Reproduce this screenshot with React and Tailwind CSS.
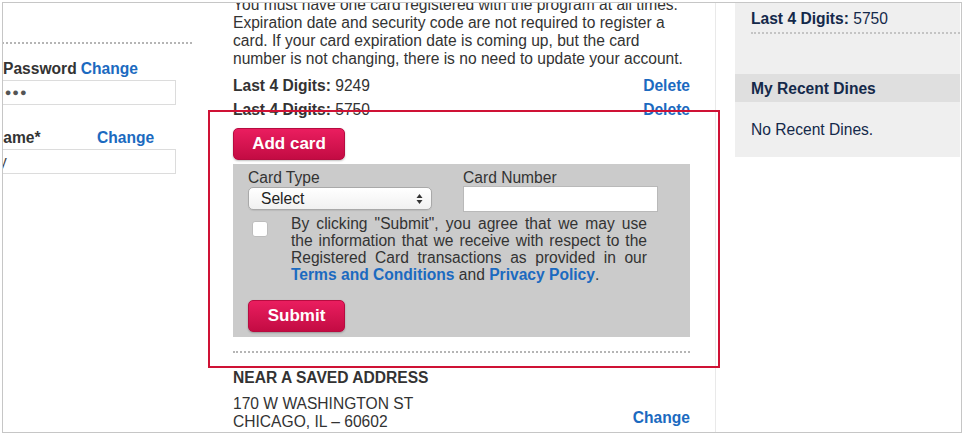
import React from 'react';

const font = "font-['Liberation_Sans',Arial,Helvetica,sans-serif]";

function LeftColumn() {
  return (
    <div className="w-[230px] shrink-0 pt-[39px]">
      <div className="-ml-[12px] w-[201px]">
        <div className="border-t-2 border-dotted border-[#b5b5b5]" />

        <div className="mt-[16px] flex h-[18px] items-center pl-[12px] font-bold leading-[18px]">
          <span className="text-[#333]">Password</span>
          <a className="ml-[4px] text-[#1b6ac0]">Change</a>
        </div>
        <div className="mt-[2px] flex h-[25px] w-[185px] items-center border border-[#dcdcdc] bg-white pl-[5px] text-[11px] tracking-[1px] text-[#555]">
          ●●●●
        </div>

        <div className="mt-[24px] flex h-[18px] items-center pl-[1px] font-bold leading-[18px]">
          <span className="w-[105px] text-[#333]">Name*</span>
          <a className="text-[#1b6ac0]">Change</a>
        </div>
        <div className="mt-[2px] flex h-[25px] w-[185px] items-center border border-[#dcdcdc] bg-white pl-[7px] text-[#444]">
          y
        </div>
      </div>
    </div>
  );
}

function RedButton({ children, className = '' }) {
  return (
    <button
      className={`flex h-[32px] items-center justify-center rounded-[5px] border border-[#b70c40] bg-linear-to-b from-[#ea1d5f] to-[#c30b43] text-[17px] font-bold text-white shadow-[0_1px_2px_rgba(0,0,0,0.25)] ${className}`}
    >
      {children}
    </button>
  );
}

function SelectBox() {
  return (
    <div className="flex h-[23px] w-[184px] items-center justify-between rounded-[5px] border border-[#a9a9a9] bg-linear-to-b from-white to-[#f1f1f1] pl-[12px] pr-[8px] text-[#222] shadow-[0_1px_1px_rgba(0,0,0,0.08)]">
      <span className="leading-[18px]">Select</span>
      <svg width="7" height="12" viewBox="0 0 7 12">
        <path d="M3.5 1 L6.5 5 L0.5 5 Z" fill="#333" />
        <path d="M3.5 11 L6.5 7 L0.5 7 Z" fill="#333" />
      </svg>
    </div>
  );
}

function CardForm() {
  return (
    <div className="mt-[4px] bg-[#cbcbcb] pb-[5px] pl-[15px] pr-[10px] pt-[5px]">
      <div className="flex">
        <div className="w-[215px]">
          <div className="leading-[18px] text-[#333]">Card Type</div>
          <SelectBox />
        </div>
        <div>
          <div className="leading-[18px] text-[#333]">Card Number</div>
          <div className="-mt-[1px] h-[26px] w-[195px] border border-[#b9b9b9] bg-white" />
        </div>
      </div>

      <div className="mt-[2.5px] flex items-start">
        <div className="ml-[4px] mt-[6.5px] h-[16px] w-[16px] shrink-0 rounded-[3px] border border-[#bdbdbd] bg-white" />
        <p className="ml-[23px] w-[356px] text-justify leading-[17px] text-[#333]">
          By clicking "Submit", you agree that we may use the information that we receive with
          respect to the Registered Card transactions as provided in our{' '}
          <a className="font-bold text-[#1b6ac0]">Terms and Conditions</a> and{' '}
          <a className="font-bold text-[#1b6ac0]">Privacy Policy</a>.
        </p>
      </div>

      <RedButton className="mt-[17.5px] w-[97px]">Submit</RedButton>
    </div>
  );
}

function DigitsRow({ digits }) {
  return (
    <div className="flex h-[24px] items-center justify-between pt-[2px]">
      <div className="text-[#333]">
        <span className="font-bold">Last 4 Digits:</span> {digits}
      </div>
      <a className="font-bold text-[#1b6ac0]">Delete</a>
    </div>
  );
}

function MiddleColumn() {
  return (
    <div className="flex shrink-0 border-r border-[#e9e9e9]">
      <div className="-mt-[7px] w-[457px]">
        <p className="leading-[18px] text-[#333]">
          You must have one card registered with the program at all times. Expiration date and
          security code are not required to register a card. If your card expiration date is
          coming up, but the card number is not changing, there is no need to update your account.
        </p>

        <div className="mt-[5px]">
          <DigitsRow digits="9249" />
          <DigitsRow digits="5750" />
        </div>

        <RedButton className="mt-[7px] w-[112px]">Add card</RedButton>

        <CardForm />

        <div className="mt-[14px] border-t-2 border-dotted border-[#b5b5b5]" />

        <div className="mt-[15.5px] font-bold leading-[18px] text-[#333]">NEAR A SAVED ADDRESS</div>

        <div className="mt-[8.5px] flex items-end justify-between">
          <div className="leading-[17.7px] text-[#333]">
            <div>170 W WASHINGTON ST</div>
            <div>CHICAGO, IL – 60602</div>
          </div>
          <a className="mb-[3px] font-bold leading-[18px] text-[#1b6ac0]">Change</a>
        </div>
      </div>
      <div className="w-[25px]" />
    </div>
  );
}

function RightPanel() {
  return (
    <div className="ml-[19px] w-[225px] shrink-0">
      <div className="bg-[#efefef] pb-[18px] pt-[7px]">
        <div className="pl-[16px] leading-[18px] text-[#14294a]">
          <span className="font-bold">Last 4 Digits:</span> 5750
        </div>
        <div className="ml-[16px] mt-[4px] border-t-2 border-dotted border-[#c4c4c4]" />

        <div className="mt-[40px] flex h-[28px] items-center bg-[#dfdfdf] pl-[16px] pt-[2px] font-bold text-[#14294a]">
          My Recent Dines
        </div>

        <div className="mt-[19px] pl-[16px] leading-[18px] text-[#14294a]">No Recent Dines.</div>
      </div>
    </div>
  );
}

export default function App() {
  return (
    <div className={`h-[437px] w-[970px] bg-white pl-[2px] pt-[2px] text-[15.6px] ${font}`}>
      <div className="relative h-[431px] w-[960px] overflow-hidden border border-[#c6c6c6] bg-white">
        <div className="flex h-full">
          <LeftColumn />
          <MiddleColumn />
          <RightPanel />
        </div>

        {/* annotation box drawn over the card form */}
        <div className="pointer-events-none absolute left-[205px] top-[107px] h-[258px] w-[512px] border-2 border-[#cf1235]" />
      </div>
    </div>
  );
}
